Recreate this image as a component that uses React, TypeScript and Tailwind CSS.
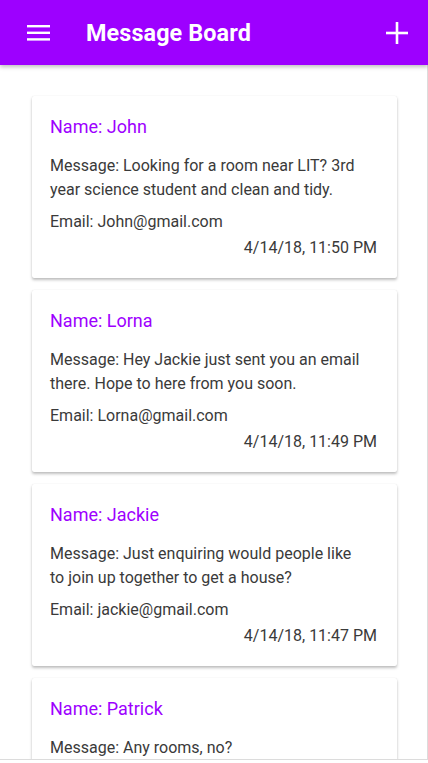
import React from 'react';

type Post = {
  name: string;
  message: string;
  email: string;
  date: string;
};

const posts: Post[] = [
  {
    name: 'John',
    message: 'Looking for a room near LIT? 3rd year science student and clean and tidy.',
    email: 'John@gmail.com',
    date: '4/14/18, 11:50 PM',
  },
  {
    name: 'Lorna',
    message: 'Hey Jackie just sent you an email there. Hope to here from you soon.',
    email: 'Lorna@gmail.com',
    date: '4/14/18, 11:49 PM',
  },
  {
    name: 'Jackie',
    message: 'Just enquiring would people like to join up together to get a house?',
    email: 'jackie@gmail.com',
    date: '4/14/18, 11:47 PM',
  },
  {
    name: 'Patrick',
    message: 'Any rooms, no?',
    email: 'patrick@gmail.com',
    date: '4/14/18, 11:45 PM',
  },
];

const App: React.FC = () => {
  return (
    <div
      className="w-[428px] h-[763px] overflow-hidden flex flex-col bg-white"
      style={{ fontFamily: 'Roboto, "Liberation Sans", sans-serif' }}
    >
      {/* Toolbar */}
      <header className="relative z-10 h-[65px] shrink-0 bg-[#9d00ff] flex items-center shadow-[0_2px_4px_rgba(0,0,0,0.25)]">
        <button className="w-[76px] h-full flex items-center pl-[27px] pt-[1px]">
          <svg width="23" height="16" viewBox="0 0 23 16">
            <rect x="0" y="0" width="23" height="2.4" fill="white" />
            <rect x="0" y="6.6" width="23" height="2.4" fill="white" />
            <rect x="0" y="13.2" width="23" height="2.4" fill="white" />
          </svg>
        </button>
        <h1 className="ml-[10px] mt-[3px] text-white text-[23.4px] font-bold tracking-[0.1px] flex-1">Message Board</h1>
        <button className="w-[54px] h-full flex items-center justify-center pr-[8px]">
          <svg width="22" height="22" viewBox="0 0 22 22">
            <rect x="0" y="9.7" width="22" height="2.6" fill="white" />
            <rect x="9.7" y="0" width="2.6" height="22" fill="white" />
          </svg>
        </button>
      </header>

      {/* Content */}
      <main className="flex-1 overflow-hidden border-r border-b border-[#dcdcdc] mb-[3px]">
        <div className="pt-[31px] pl-[32px] pr-[30px] flex flex-col gap-[12px]">
          {posts.map((p) => (
            <div
              key={p.name}
              className="bg-white rounded-[2px] shadow-[0_2px_3px_rgba(0,0,0,0.25),0_0_1px_rgba(0,0,0,0.12)] pt-[20px] pb-[18px] pl-[18px] pr-[20px]"
            >
              <h2 className="text-[18px] leading-[21px] text-[#9d00ff]">Name: {p.name}</h2>
              <p className="mt-[17px] pr-[14px] text-[16px] leading-[24px] text-[#3a3a3a]">Message: {p.message}</p>
              <p className="mt-[8px] text-[16px] leading-[24px] text-[#3a3a3a]">Email: {p.email}</p>
              <p className="mt-[2px] text-[16px] leading-[24px] text-[#3a3a3a] text-right">{p.date}</p>
            </div>
          ))}
        </div>
      </main>
    </div>
  );
};

export default App;
